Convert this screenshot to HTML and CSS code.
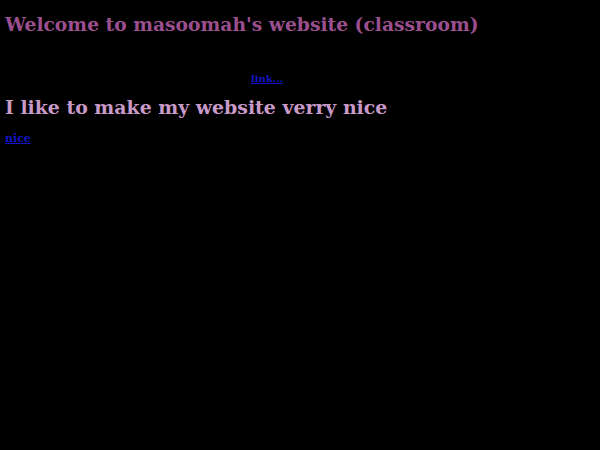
FILE: index.html
```html
<!DOCTYPE html>
<html>
<head>
<meta charset="utf-8">
<title>masoomah's website</title>
<link rel="stylesheet" href="styles.css">
</head>
<body>
<h1 class="title">Welcome to masoomah's website (classroom)</h1>
<p class="center"><a class="lnk small" href="#">link...</a></p>
<h2 class="sub">I like to make my website verry nice</h2>
<p class="left"><a class="lnk" href="#">nice</a></p>
</body>
</html>
```
FILE: styles.css
```css
html, body { background: #000; }
body {
  margin: 0;
  padding: 5px 5px;
  font-family: "DejaVu Serif", serif;
}
.title {
  margin: 8px 0 0 0;
  font-size: 18.72px;
  font-weight: bold;
  color: #9b4f8f;
}
.center {
  margin: 32px 0 0 0;
  text-align: center;
  padding-right: 66px;
}
.lnk {
  color: #1414c4;
  font-size: 11px;
  font-weight: bold;
}
.lnk.small { font-size: 10px; }
.sub {
  margin: 10px 0 0 0;
  font-size: 18.9px;
  font-weight: bold;
  color: #c89ac8;
}
.left { margin: 9px 0 0 0; }
```
